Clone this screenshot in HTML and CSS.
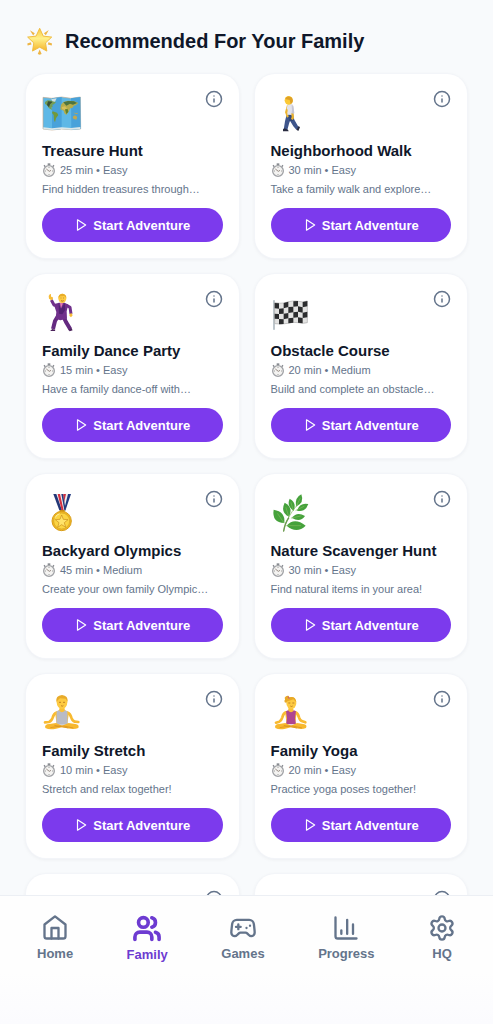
FILE: index.html
```
<!DOCTYPE html>
<html lang="en">

<head>
    <meta charset="utf-8">
    <meta name="viewport" content="width=device-width, initial-scale=1">
    <title>Recommended For Your Family</title>
    <link rel="stylesheet" href="styles.css">
</head>

<body>
    <!-- shared icons -->
    <svg class="sprite" aria-hidden="true">
        <symbol id="info" viewBox="0 0 24 24">
            <circle cx="12" cy="12" r="10" />
            <path d="M12 16v-4M12 8h.01" />
        </symbol>
        <symbol id="play" viewBox="0 0 24 24">
            <path d="M6 3l14 9-14 9z" />
        </symbol>
        <symbol id="watch" viewBox="18 13 42 42">
            <path d="M35 14h8v6h-8z" fill="#888b90" />
            <path d="M24 20l4 4M54 20l-4 4" stroke="#85888e" stroke-width="4" />
            <circle cx="39" cy="37" r="16" fill="#f4f3f1" stroke="#a0a2a6" stroke-width="4" />
            <path d="M39 25v3M39 46v3M27 37h3M48 37h3" stroke="#777" stroke-width="2" />
            <path d="M31 31l9 7 5-3" fill="none" stroke="#6b5a50" stroke-width="2" />
        </symbol>
    </svg>

    <main>
        <header>
            <svg class="star" viewBox="18 18 84 86" aria-hidden="true">
                <defs>
                    <linearGradient id="gold" x1="0" y1="0" x2="0" y2="1">
                        <stop offset="0" stop-color="#f9c740" />
                        <stop offset=".45" stop-color="#fff08a" />
                        <stop offset="1" stop-color="#f5b329" />
                    </linearGradient>
                </defs>
                <path d="M29 28l15 9-5 7zM87 27l-15 10 6 6zM53 101l6-14 6 14-6 2zM21 69l11-4 2 7-12 3zM97 69l-11-4-2 7 12 3z" fill="#eeb545" />
                <path d="M59 22l11 24 26 3-19 18 4 25-22-12-22 12 4-25-19-18 26-3z" fill="url(#gold)" stroke="#f0bc43" stroke-width="3" stroke-linejoin="round" />
            </svg>
            <h1>Recommended For Your Family</h1>
        </header>

        <div class="grid">
            <article class="card">
                <div class="card-top">
                    <svg class="emoji" viewBox="66 69 120 120" aria-hidden="true">
                        <path d="M69 82l27 3 29-4 28 4 28-4 1 96-28 2-29-2-29 3-27-3z" fill="#5eb8e6" stroke="#c5ab8f" stroke-width="2" />
                        <path d="M96 85l29-4v96l-29 3zM153 85l28-4 1 96-28 2z" fill="#48a2da" />
                        <path d="M70 172l26 3 29-3 28 2 28-3v6l-27 2-29-2-29 3-26-3z" fill="#dce8e9" />
                        <path d="M75 96l8-5 14 1 11 4-6 7-5 1 1 6-4 3 3 7-10-5-5-8-7-6z" fill="#749d55" />
                        <path d="M84 94l14 1-8 8-3 9-6-7z" fill="#354f36" />
                        <path d="M94 87l16-2-5 10-8-1z" fill="#cfe0df" />
                        <path d="M98 124l13 4 4 7-7 10-3 12-3-7-1-15-5-6z" fill="#72993b" />
                        <path d="M123 104l7-8 14-4 19 2 12 5-8 7-6 1-3 6-7 2-4 8-8 12-6-5-2-8-10-4z" fill="#b5ad4c" />
                        <path d="M130 97l14-4 18 1 9 5-12 5-9-3-11 6z" fill="#4c7440" />
                        <path d="M125 111l10-2 6 6-5 5-9-2z" fill="#d6c05a" />
                        <path d="M135 118l8-1 2 9-6 6z" fill="#5e812f" />
                        <path d="M158 140l7-4 7 5-3 8-9-3zM160 127l7 3 5-2 1 4-8-1z" fill="#c1a850" />
                    </svg>
                    <button class="info" aria-label="About Treasure Hunt"><svg><use href="#info" /></svg></button>
                </div>
                <h2>Treasure Hunt</h2>
                <p class="meta"><svg><use href="#watch" /></svg>25 min • Easy</p>
                <p class="desc">Find hidden treasures through…</p>
                <button class="start"><svg><use href="#play" /></svg>Start Adventure</button>
            </article>

            <article class="card">
                <div class="card-top">
                    <svg class="emoji" viewBox="16 24 120 120" aria-hidden="true">
                        <path d="M64 86l18 1 4 17 13 23-7 7-9-10-10-17-3 9-5 19-11-1 4-25 4-17z" fill="#3f568c" />
                        <path d="M67 90l13-1 3 18-12 2z" fill="#344979" />
                        <path d="M52 133l4-3 11 4 2 5H52zM92 134l7-11 4 4-5 11z" fill="#282b40" />
                        <path d="M64 60l-6 22 6 16 5-3-3-13 7-17z" fill="#edb52f" />
                        <path d="M67 54l13 2 5 15-2 19-18-1 1-15-3-3z" fill="#e2e3ec" />
                        <path d="M78 60l5 2 3 22-5 8-4-1 2-16z" fill="#c6c6d6" />
                        <path d="M77 85l7 1 1 14-5 5-4-4 2-5z" fill="#eab12b" />
                        <ellipse cx="69" cy="46" rx="12" ry="13" fill="#fbc936" />
                        <path d="M59 40q4-7 13-5 12 2 9 17l-6 6-3-13-11-2z" fill="#dfa126" />
                    </svg>
                    <button class="info" aria-label="About Neighborhood Walk"><svg><use href="#info" /></svg></button>
                </div>
                <h2>Neighborhood Walk</h2>
                <p class="meta"><svg><use href="#watch" /></svg>30 min • Easy</p>
                <p class="desc">Take a family walk and explore…</p>
                <button class="start"><svg><use href="#play" /></svg>Start Adventure</button>
            </article>

            <article class="card">
                <div class="card-top">
                    <svg class="emoji" viewBox="18 24 120 120" aria-hidden="true">
                        <path d="M46 45l8 15 13 3M90 60l12 7 3 20" fill="none" stroke="#70308b" stroke-width="9" stroke-linejoin="round" />
                        <path d="M67 92l-10 16-6 24M82 94l8 17 13 22" fill="none" stroke="#642a80" stroke-width="12" stroke-linejoin="round" />
                        <path d="M58 56l11-3h17l11 6-5 20 1 22-20 5-14-5 2-20-6-18z" fill="#70308b" />
                        <path d="M68 55l7 17 11-18 2 20-9 14-10-2z" fill="#532272" />
                        <path d="M72 54l9 1-6 15z" fill="#e77bb0" />
                        <path d="M39 41l-1-8 4-6 3 1v7l5 1 1 6-5 4zM101 86l6-1 3 6-5 6-5-5z" fill="#f7bc38" />
                        <path d="M43 137l6-5 9 2-1 4H43zM97 134l9-5 4 7-9 3z" fill="#4c235c" />
                        <ellipse cx="79" cy="40" rx="12" ry="14" fill="#fdcb43" />
                        <path d="M67 39q0-12 12-13 12 1 12 13l-6-6-12 1z" fill="#e8ad29" />
                        <path d="M74 39h2M82 39h2M75 47q4 3 8 0" stroke="#8b551e" stroke-width="2" fill="none" />
                    </svg>
                    <button class="info" aria-label="About Family Dance Party"><svg><use href="#info" /></svg></button>
                </div>
                <h2>Family Dance Party</h2>
                <p class="meta"><svg><use href="#watch" /></svg>15 min • Easy</p>
                <p class="desc">Have a family dance-off with…</p>
                <button class="start"><svg><use href="#play" /></svg>Start Adventure</button>
            </article>

            <article class="card">
                <div class="card-top">
                    <svg class="emoji" viewBox="16 24 120 120" aria-hidden="true">
                        <path d="M25 47v86" stroke="#9daab2" stroke-width="4" stroke-linecap="round" />
                        <path d="M27 53q15 3 28 1 28-9 43-5 15 4 27-1v65q-14 4-28 0-15-3-30 2-22 4-40 1z" fill="#e3e3e2" stroke="#aaaaab" stroke-width="2" />
                        <g fill="#2b2c2e">
                            <path d="M27 54l13 1v16l-13-1zM54 54l14-4v16l-14 4zM83 49l14-1v16l-14 1zM111 51l14-3v16l-14 3z" />
                            <path d="M40 71l14-1v16l-14 1zM68 66l15-1v17l-15 2zM97 64l14 3v16l-14-3z" />
                            <path d="M27 86l13 1v15l-13-1zM54 86l14-2v16l-14 3zM83 82l14-2v17l-14 1zM111 83l14-3v17l-14 2z" />
                            <path d="M40 102l14 1v14l-14 1zM68 100l15-2v15l-15 2zM97 97l14 2v16l-14-2z" />
                        </g>
                    </svg>
                    <button class="info" aria-label="About Obstacle Course"><svg><use href="#info" /></svg></button>
                </div>
                <h2>Obstacle Course</h2>
                <p class="meta"><svg><use href="#watch" /></svg>20 min • Medium</p>
                <p class="desc">Build and complete an obstacle…</p>
                <button class="start"><svg><use href="#play" /></svg>Start Adventure</button>
            </article>

            <article class="card">
                <div class="card-top">
                    <svg class="emoji" viewBox="18 24 120 120" aria-hidden="true">
                        <path d="M80 73l14-46h11L88 77z" fill="#223a80" />
                        <path d="M77 73l11-46h8L84 75z" fill="#eee" />
                        <path d="M70 73l12-46h8L79 76z" fill="#cf2f3e" />
                        <path d="M52 27h29l7 48H71z" fill="#f1f1f4" />
                        <path d="M52 27h9l17 49h-8z" fill="#233777" />
                        <path d="M65 27h7l11 49h-6z" fill="#d62f3d" />
                        <path d="M76 27h5l8 47-4 2z" fill="#263a7b" />
                        <path d="M71 75h15v7H71z" fill="#c98f18" />
                        <circle cx="77" cy="108" r="29" fill="#efb823" stroke="#d99d17" stroke-width="3" />
                        <circle cx="77" cy="108" r="24" fill="#fbd443" stroke="#d7a323" stroke-width="2" />
                        <path d="M77 90l5 13 14 1-11 9 4 14-12-8-12 8 4-14-11-9 14-1z" fill="#ffe36a" stroke="#c98d1b" stroke-width="2" />
                        <path d="M57 98q5-10 14-12" stroke="#fff2a5" stroke-width="3" fill="none" />
                    </svg>
                    <button class="info" aria-label="About Backyard Olympics"><svg><use href="#info" /></svg></button>
                </div>
                <h2>Backyard Olympics</h2>
                <p class="meta"><svg><use href="#watch" /></svg>45 min • Medium</p>
                <p class="desc">Create your own family Olympic…</p>
                <button class="start"><svg><use href="#play" /></svg>Start Adventure</button>
            </article>

            <article class="card">
                <div class="card-top">
                    <svg class="emoji" viewBox="16 24 120 120" aria-hidden="true">
                        <g fill="#46a23c">
                            <path d="M56 114q-38-2-32-40 36 6 32 40z" />
                            <path d="M70 95q-27-12-13-42 27 14 13 42z" />
                            <path d="M84 77q-22-14-12-36 22 12 12 36z" />
                            <path d="M91 65q-5-27 16-37 10 26-16 37z" />
                            <path d="M94 77q9-26 34-20-9 26-34 20z" />
                            <path d="M79 99q14-20 39-6-14 20-39 6z" />
                            <path d="M63 122q23-26 57 0-27 26-57 0z" />
                        </g>
                        <path d="M54 138Q58 104 95 59M55 114L36 86M69 94L61 68M83 76l-7-23M93 61l10-20M91 76l24-12M77 99l29-6M63 122h42" fill="none" stroke="#7fba5c" stroke-width="2" stroke-linecap="round" />
                        <path d="M54 138q4-24 15-39" fill="none" stroke="#6c9950" stroke-width="4" stroke-linecap="round" />
                    </svg>
                    <button class="info" aria-label="About Nature Scavenger Hunt"><svg><use href="#info" /></svg></button>
                </div>
                <h2>Nature Scavenger Hunt</h2>
                <p class="meta"><svg><use href="#watch" /></svg>30 min • Easy</p>
                <p class="desc">Find natural items in your area!</p>
                <button class="start"><svg><use href="#play" /></svg>Start Adventure</button>
            </article>

            <article class="card">
                <div class="card-top">
                    <svg class="emoji" viewBox="18 24 120 120" aria-hidden="true">
                        <path d="M61 83q-8 3-11 15-3 10-11 13l-12 1M95 83q8 3 11 15 3 10 10 12l11 1" fill="none" stroke="#f8ba31" stroke-width="8" stroke-linecap="round" stroke-linejoin="round" />
                        <path d="M71 68h14l2 8 12 6-5 35H62l-5-35 12-6z" fill="#fac037" />
                        <path d="M62 79l7-3q9 12 18 0l7 3 1 40H61z" fill="#b9bbc5" />
                        <path d="M28 129q-4-11 12-12l20-3 18 8 20-8 20 3q13 2 9 12-13 6-32 1l-17-3-18 4q-20 4-32-2z" fill="#f7b82e" />
                        <path d="M43 128l35-6 34 7M55 121l42 8" fill="none" stroke="#d48c1c" stroke-width="2" />
                        <ellipse cx="78" cy="52" rx="16" ry="20" fill="#fdca42" />
                        <path d="M61 51q-3-19 17-21 19 2 17 21l-6-10-17-1-6 5z" fill="#e8ab2a" />
                        <path d="M69 52h6M81 52h6M75 62q4 3 7 0" fill="none" stroke="#a46018" stroke-width="2" />
                    </svg>
                    <button class="info" aria-label="About Family Stretch"><svg><use href="#info" /></svg></button>
                </div>
                <h2>Family Stretch</h2>
                <p class="meta"><svg><use href="#watch" /></svg>10 min • Easy</p>
                <p class="desc">Stretch and relax together!</p>
                <button class="start"><svg><use href="#play" /></svg>Start Adventure</button>
            </article>

            <article class="card">
                <div class="card-top">
                    <svg class="emoji" viewBox="16 24 120 120" aria-hidden="true">
                        <path d="M61 82q-8 3-11 15-3 10-9 13l-10 3M89 82q8 3 11 15 3 10 10 12l9 3" fill="none" stroke="#f8ba31" stroke-width="8" stroke-linecap="round" stroke-linejoin="round" />
                        <path d="M69 67h13l2 10 9 4-4 36H63l-5-36 9-4z" fill="#fac037" />
                        <path d="M61 79l6-3q9 12 18 0l6 3-3 21 3 18H61l3-18z" fill="#b04690" />
                        <path d="M29 129q-4-11 11-12l19-3 17 8 18-8 19 3q13 2 8 12-12 6-30 1l-15-3-17 4q-19 4-30-2z" fill="#f7b82e" />
                        <path d="M42 128l34-6 33 7M54 121l40 8" fill="none" stroke="#d48c1c" stroke-width="2" />
                        <ellipse cx="77" cy="54" rx="15" ry="18" fill="#fdca42" />
                        <path d="M62 53q-6 1-6-6 4-2 1-9 4-7 11-6 4 2 2 5 20-6 22 15l-9-9q-12 4-18 6z" fill="#e8a927" />
                        <path d="M68 54h6M80 54h6M74 63q4 3 7 0" fill="none" stroke="#a46018" stroke-width="2" />
                        <path d="M67 35l4 6" stroke="#c54893" stroke-width="3" />
                    </svg>
                    <button class="info" aria-label="About Family Yoga"><svg><use href="#info" /></svg></button>
                </div>
                <h2>Family Yoga</h2>
                <p class="meta"><svg><use href="#watch" /></svg>20 min • Easy</p>
                <p class="desc">Practice yoga poses together!</p>
                <button class="start"><svg><use href="#play" /></svg>Start Adventure</button>
            </article>

            <article class="card">
                <div class="card-top end"><button class="info" aria-label="About activity"><svg><use href="#info" /></svg></button></div>
            </article>
            <article class="card">
                <div class="card-top end"><button class="info" aria-label="About activity"><svg><use href="#info" /></svg></button></div>
            </article>
        </div>
    </main>

    <nav>
        <a href="#home">
            <svg viewBox="0 0 24 24">
                <path d="M9 21v-9h6v9" />
                <path d="M3 9l9-7 9 7v10a2 2 0 0 1-2 2H5a2 2 0 0 1-2-2z" />
            </svg>
            Home
        </a>
        <a href="#family" class="active">
            <svg viewBox="0 0 24 24">
                <path d="M16 21v-2a4 4 0 0 0-4-4H6a4 4 0 0 0-4 4v2" />
                <circle cx="9" cy="7" r="4" />
                <path d="M22 21v-2a4 4 0 0 0-3-3.87M16 3.13a4 4 0 0 1 0 7.75" />
            </svg>
            Family
        </a>
        <a href="#games">
            <svg viewBox="0 0 24 24">
                <path d="M6 11h4M8 9v4M15 12h.01M18 10h.01" />
                <path d="M17.32 5H6.68a4 4 0 0 0-3.978 3.59c-.006.052-.01.101-.017.152C2.604 9.416 2 14.456 2 16a3 3 0 0 0 3 3c1 0 1.5-.5 2-1l1.414-1.414A2 2 0 0 1 9.828 16h4.344a2 2 0 0 1 1.414.586L17 18c.5.5 1 1 2 1a3 3 0 0 0 3-3c0-1.545-.604-6.584-.685-7.258-.007-.05-.011-.1-.017-.151A4 4 0 0 0 17.32 5z" />
            </svg>
            Games
        </a>
        <a href="#progress">
            <svg viewBox="0 0 24 24">
                <path d="M3 3v16a2 2 0 0 0 2 2h16M18 17V9M13 17V5M8 17v-3" />
            </svg>
            Progress
        </a>
        <a href="#hq">
            <svg viewBox="0 0 24 24">
                <path d="M9.671 4.136a2.34 2.34 0 0 1 4.659 0 2.34 2.34 0 0 0 3.319 1.915 2.34 2.34 0 0 1 2.33 4.033 2.34 2.34 0 0 0 0 3.831 2.34 2.34 0 0 1-2.33 4.033 2.34 2.34 0 0 0-3.319 1.915 2.34 2.34 0 0 1-4.659 0 2.34 2.34 0 0 0-3.32-1.915 2.34 2.34 0 0 1-2.33-4.033 2.34 2.34 0 0 0 0-3.831A2.34 2.34 0 0 1 6.35 6.051a2.34 2.34 0 0 0 3.319-1.915" />
                <circle cx="12" cy="12" r="3" />
            </svg>
            HQ
        </a>
    </nav>
</body>

</html>
```
FILE: styles.css
```
* {
    box-sizing: border-box;
}

body {
    margin: 0;
    height: 100vh;
    display: flex;
    flex-direction: column;
    background: #f8fafc;
    color: #0f172a;
    font-family: "Liberation Sans", Arial, sans-serif;
}

h1,
h2,
p {
    margin: 0;
}

button {
    font-family: inherit;
    border: none;
    padding: 0;
    cursor: pointer;
}

.sprite {
    position: absolute;
    width: 0;
    height: 0;
}

main {
    flex: 1;
    min-height: 0;
    overflow-y: auto;
    scrollbar-width: none;
    padding: 26px;
}

header {
    display: flex;
    align-items: center;
    gap: 11px;
    height: 30px;
    margin-bottom: 18px;
}

.star {
    width: 28px;
    height: 28px;
}

h1 {
    font-size: 20px;
    line-height: 30px;
}

.grid {
    display: grid;
    grid-template-columns: 1fr 1fr;
    gap: 16px;
}

.card {
    min-width: 0;
    min-height: 184px;
    padding: 16px;
    background: #fff;
    border-radius: 20px;
    box-shadow: 0 0 0 1px #f3f5f9, 0 1px 4px rgba(15, 23, 42, 0.07);
}

.card-top {
    display: flex;
    justify-content: space-between;
    align-items: flex-start;
    height: 43px;
    margin-bottom: 8px;
}

.card-top.end {
    justify-content: flex-end;
}

.emoji {
    width: 40px;
    height: 40px;
    align-self: flex-end;
}

.info {
    display: flex;
    background: none;
    color: #64748b;
}

.info svg {
    width: 18px;
    height: 18px;
}

.info svg,
.start svg,
nav svg {
    fill: none;
    stroke: currentColor;
    stroke-width: 2;
    stroke-linecap: round;
    stroke-linejoin: round;
}

h2 {
    font-size: 15px;
    line-height: 20px;
    white-space: nowrap;
}

.meta,
.desc {
    color: #64748b;
    font-size: 11px;
    line-height: 18px;
    white-space: nowrap;
}

.meta {
    display: flex;
    align-items: center;
    gap: 4px;
}

.meta svg {
    width: 14px;
    height: 14px;
}

.desc {
    line-height: 20px;
}

.start {
    display: flex;
    align-items: center;
    justify-content: center;
    gap: 5px;
    width: 100%;
    height: 34px;
    margin-top: 9px;
    border-radius: 17px;
    background: #7c3aed;
    color: #fff;
    font-size: 13px;
    font-weight: bold;
}

.start svg {
    width: 14px;
    height: 14px;
}

nav {
    flex: none;
    display: flex;
    justify-content: space-between;
    padding: 18px 37px 60px;
    border-top: 1px solid #eceff4;
    background: linear-gradient(#fefefe 60%, #fbfbfe);
}

nav a {
    display: flex;
    flex-direction: column;
    align-items: center;
    gap: 3px;
    height: 50px;
    color: #64748b;
    font-size: 13px;
    line-height: 18px;
    font-weight: bold;
    text-decoration: none;
}

nav svg {
    width: 28px;
    height: 28px;
}

nav .active {
    color: #6d3bd1;
}

nav .active svg {
    width: 30px;
    height: 30px;
    stroke-width: 3;
}
```
